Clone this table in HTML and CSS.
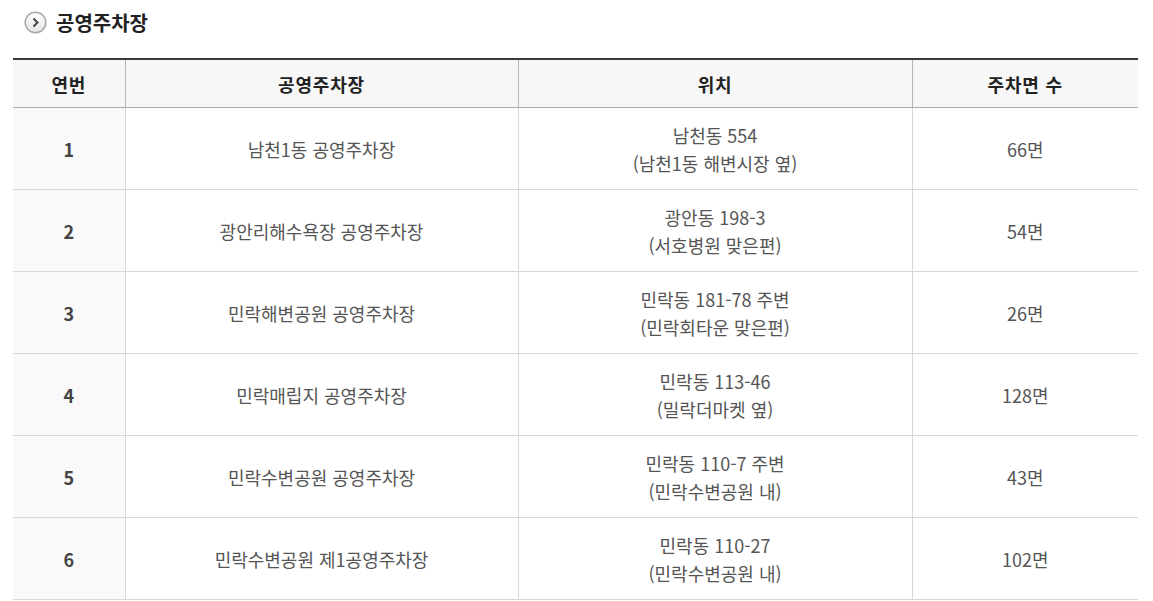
FILE: index.html
```html
<!DOCTYPE html>
<html lang="ko">
<head>
<meta charset="utf-8">
<link rel="stylesheet" href="styles.css">
</head>
<body>
<div class="wrap">
  <h3 class="title">
    <span class="ico"><svg width="23" height="23" viewBox="0 0 23 23"><defs><linearGradient id="g" x1="0" y1="0" x2="0" y2="1"><stop offset="0" stop-color="#ffffff"/><stop offset="1" stop-color="#e4e4e4"/></linearGradient></defs><circle cx="11.5" cy="11.5" r="10.3" fill="url(#g)" stroke="#a8a8a8" stroke-width="1.5"/><path d="M9.5 7.5 L13.5 11.5 L9.5 15.5" fill="none" stroke="#444" stroke-width="2"/></svg></span>
    공영주차장
  </h3>
  <table class="tbl">
    <colgroup>
      <col class="c1"><col class="c2"><col class="c3"><col class="c4">
    </colgroup>
    <thead>
      <tr><th>연번</th><th>공영주차장</th><th>위치</th><th>주차면 수</th></tr>
    </thead>
    <tbody>
      <tr><td class="no">1</td><td>남천1동 공영주차장</td><td>남천동 554<br>(남천1동 해변시장 옆)</td><td>66면</td></tr>
      <tr><td class="no">2</td><td>광안리해수욕장 공영주차장</td><td>광안동 198-3<br>(서호병원 맞은편)</td><td>54면</td></tr>
      <tr><td class="no">3</td><td>민락해변공원 공영주차장</td><td>민락동 181-78 주변<br>(민락회타운 맞은편)</td><td>26면</td></tr>
      <tr><td class="no">4</td><td>민락매립지 공영주차장</td><td>민락동 113-46<br>(밀락더마켓 옆)</td><td>128면</td></tr>
      <tr><td class="no">5</td><td>민락수변공원 공영주차장</td><td>민락동 110-7 주변<br>(민락수변공원 내)</td><td>43면</td></tr>
      <tr><td class="no">6</td><td>민락수변공원 제1공영주차장</td><td>민락동 110-27<br>(민락수변공원 내)</td><td>102면</td></tr>
    </tbody>
  </table>
</div>
</body>
</html>
```
FILE: styles.css
```css
html, body {
  margin: 0;
  padding: 0;
  background: #fff;
}
body {
  font-family: "Noto Sans CJK KR", "Noto Sans", sans-serif;
  color: #555;
}
.wrap {
  padding: 7px 15px 0 13px;
}
.title {
  margin: 0 0 21px 11px;
  height: 30px;
  display: flex;
  align-items: center;
  gap: 9px;
  font-size: 20px;
  font-weight: 700;
  color: #222;
}
.ico {
  display: flex;
  width: 23px;
  height: 23px;
}
.tbl {
  width: 1125px;
  border-collapse: collapse;
  table-layout: fixed;
  border-top: 2px solid #3a3a3a;
}
.c1 { width: 112px; }
.c2 { width: 393px; }
.c3 { width: 394px; }
.c4 { width: 226px; }
.tbl th {
  height: 47px;
  padding: 0;
  background: #f7f7f7;
  font-size: 18px;
  font-weight: 700;
  color: #222;
  border-bottom: 1px solid #a9a9a9;
  border-left: 1px solid #b5b5b5;
  text-align: center;
  line-height: 24px;
  letter-spacing: 0.8px;
}
.tbl th:first-child { border-left: 0; }
.tbl td {
  height: 81px;
  padding: 0;
  text-align: center;
  font-size: 18px;
  line-height: 28px;
  color: #555;
  border-bottom: 1px solid #d8d8d8;
  border-left: 1px solid #d8d8d8;
}
.tbl td:first-child { border-left: 0; }
.tbl td.no {
  background: #f9f9f9;
  font-weight: 700;
  color: #444;
}
```
